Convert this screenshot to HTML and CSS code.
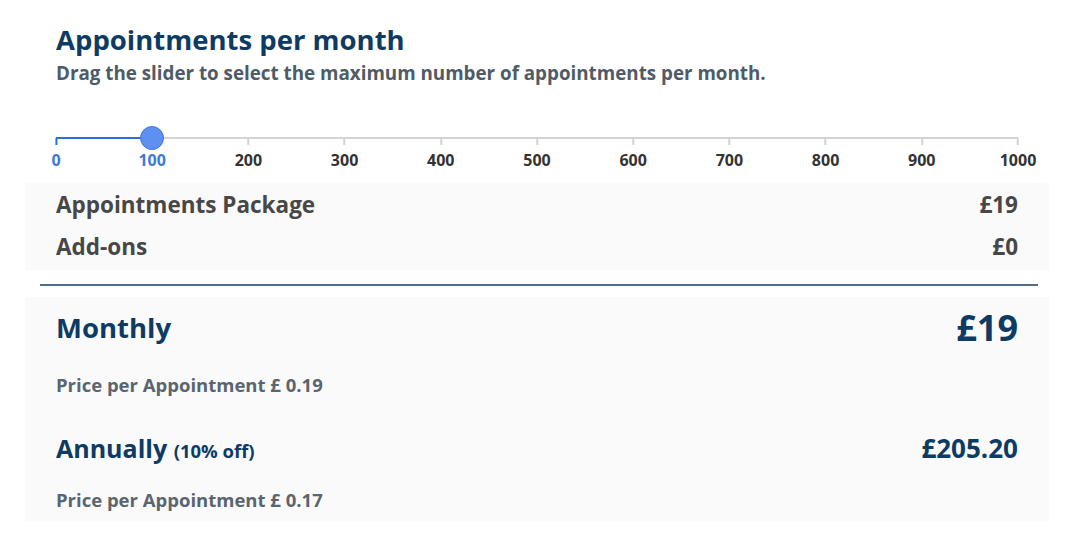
FILE: index.html
```html
<!DOCTYPE html>
<html lang="en">
<head>
  <meta charset="UTF-8">
  <meta name="viewport" content="width=device-width, initial-scale=1.0">
  <title>Appointments per month</title>
  <link rel="stylesheet" href="styles.css">
</head>
<body>
  <div class="pricing">
    <div class="header">
      <h1>Appointments per month</h1>
      <p class="subtitle">Drag the slider to select the maximum number of appointments per month.</p>
    </div>

    <div class="slider">
      <div class="track">
        <div class="track-fill" style="width: 10%"></div>
        <div class="thumb" style="left: 10%"></div>
      </div>
      <div class="scale">
        <span class="tick active" style="left: 0%">0</span>
        <span class="tick active" style="left: 10%">100</span>
        <span class="tick" style="left: 20%">200</span>
        <span class="tick" style="left: 30%">300</span>
        <span class="tick" style="left: 40%">400</span>
        <span class="tick" style="left: 50%">500</span>
        <span class="tick" style="left: 60%">600</span>
        <span class="tick" style="left: 70%">700</span>
        <span class="tick" style="left: 80%">800</span>
        <span class="tick" style="left: 90%">900</span>
        <span class="tick" style="left: 100%">1000</span>
      </div>
    </div>

    <div class="breakdown">
      <div class="line-item"><span>Appointments Package</span><span>£19</span></div>
      <div class="line-item"><span>Add-ons</span><span>£0</span></div>
    </div>

    <hr class="divider">

    <div class="totals">
      <div class="plan plan-monthly">
        <span class="plan-name">Monthly</span>
        <span class="plan-price">£19</span>
      </div>
      <p class="unit-price">Price per Appointment £ 0.19</p>

      <div class="plan plan-annual">
        <span class="plan-name">Annually <small>(10% off)</small></span>
        <span class="plan-price">£205.20</span>
      </div>
      <p class="unit-price">Price per Appointment £ 0.17</p>
    </div>
  </div>
</body>
</html>
```

FILE: styles.css
```css
body {
  margin: 0;
  background: #fff;
  font-family: "Open Sans", "Noto Sans", sans-serif;
}

.pricing {
  width: 1024px;
  padding: 0 21px 0 25px;
}

.header {
  padding: 24px 31px 0;
}

.header h1 {
  margin: 0;
  font-size: 27.5px;
  line-height: 32px;
  font-weight: 700;
  color: #0e3b64;
}

.subtitle {
  margin: 6px 0 0;
  font-size: 18.8px;
  line-height: 22px;
  font-weight: 700;
  color: #4e5b68;
}

/* slider */
.slider {
  margin: 42px 31px 0;
}

.track {
  position: relative;
  height: 24px;
}

.track::before {
  content: "";
  position: absolute;
  left: 0;
  right: 0;
  top: 11px;
  height: 2px;
  background: #d3d3d3;
}

.track-fill {
  position: absolute;
  left: 0;
  top: 11px;
  height: 2px;
  background: #2b6fd8;
}

.thumb {
  position: absolute;
  top: 0;
  z-index: 1;
  width: 24px;
  height: 24px;
  margin-left: -12px;
  box-sizing: border-box;
  border-radius: 50%;
  background: #5e90f1;
  border: 1px solid #3f77de;
}

.scale {
  position: relative;
  height: 20px;
}

.tick {
  position: absolute;
  top: 0;
  transform: translateX(-50%);
  font-size: 16px;
  line-height: 21px;
  font-weight: 700;
  color: #333;
}

.tick::before {
  content: "";
  position: absolute;
  left: 50%;
  top: -12px;
  width: 2px;
  height: 7px;
  margin-left: -1px;
  background: #d3d3d3;
}

.tick.active {
  color: #3b7ad8;
}

.tick.active::before {
  background: #2b6fd8;
}

/* price boxes */
.breakdown {
  margin-top: 13px;
  padding: 1px 31px 2px;
  background: #fafafa;
}

.line-item {
  display: flex;
  justify-content: space-between;
  height: 42px;
  line-height: 42px;
  font-size: 22.5px;
  font-weight: 700;
  color: #474747;
}

.divider {
  margin: 14px 11px 0 15px;
  border: none;
  height: 2px;
  background: #4f6d87;
}

.totals {
  margin-top: 11px;
  padding: 5px 31px 11px;
  background: #fafafa;
}

.plan {
  display: flex;
  justify-content: space-between;
  align-items: center;
  font-weight: 700;
  color: #0e3b64;
}

.plan-monthly {
  height: 50px;
}

.plan-monthly .plan-name {
  font-size: 27.5px;
}

.plan-monthly .plan-price {
  font-size: 36px;
}

.plan-annual {
  height: 36px;
  margin-top: 34px;
  font-size: 25px;
}

.plan-annual small {
  font-size: 18.5px;
}

.plan-annual .plan-price {
  font-size: 26px;
}

.unit-price {
  margin: 22px 0 0;
  font-size: 18.5px;
  line-height: 22px;
  font-weight: 700;
  color: #5a6570;
}

.plan-annual + .unit-price {
  margin-top: 23px;
}
```
